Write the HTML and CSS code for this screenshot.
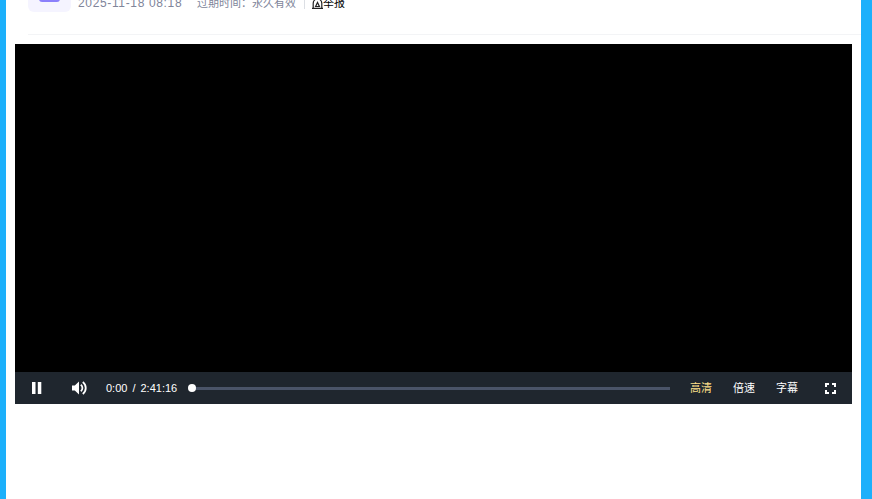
FILE: index.html
```html
<!DOCTYPE html>
<html>
<head>
  <title>Video</title>
  <link rel="stylesheet" href="styles.css">
</head>
<body>

  <div class="page">
    <div class="info">
      <div class="info-row">
        <div class="file-icon"><span class="file-icon-inner"></span></div>
        <span class="date">2025-11-18 08:18</span>
        <span class="expire">过期时间：永久有效</span>
        <span class="sep"></span>
        <span class="report">
          <svg class="report-icon" width="11" height="11" viewBox="0 0 11 11" fill="none" stroke="#222" stroke-width="1.2">
            <path d="M0 10.4h11M1.2 10.4V5.2C1.2 2.8 3.2 1 5.5 1s4.300 1.800 4.300 4.200v5.200"/>
            <path d="M3.600 8.500 5.500 4.500 7.400 8.500z"/>
          </svg>
          <span>举报</span>
        </span>
      </div>
    </div>

    <div class="player">
      <div class="screen"></div>
      <div class="controls">
        <svg class="pause" width="10" height="12" viewBox="0 0 10 12" fill="#fff">
          <rect x="0" y="0" width="3.5" height="12"/>
          <rect x="5.800" y="0" width="3.5" height="12"/>
        </svg>
        <svg class="volume" width="16" height="14" viewBox="0 0 16 14" fill="none">
          <path d="M0 4.500h2.800L7 0.500v13L2.800 9.500H0z" fill="#fff"/>
          <path d="M8.800 3.800a4 4 0 0 1 0 6.400" stroke="#fff" stroke-width="1.800"/>
          <path d="M10.800 1a7.600 7.600 0 0 1 0 12" stroke="#fff" stroke-width="1.800"/>
        </svg>
        <span class="time">0:00<span class="slash">/</span>2:41:16</span>
        <div class="progress"><span class="knob"></span></div>
        <span class="ctl-text quality">高清</span>
        <span class="ctl-text">倍速</span>
        <span class="ctl-text">字幕</span>
        <svg class="fullscreen" width="11" height="11" viewBox="0 0 11 11" fill="none" stroke="#fff" stroke-width="2">
          <path d="M1 4V1h3M7 1h3v3M10 7v3H7M4 10H1V7"/>
        </svg>
      </div>
    </div>
  </div>

</body>
</html>
```

FILE: styles.css
```css
html, body {
  margin: 0;
  padding: 0;
  height: 499px;
  overflow: hidden;
}

body {
  background-color: #fff;
  font-family: "Liberation Sans", "Noto Sans CJK SC", sans-serif;
}

.page {
  height: 499px;
  box-sizing: border-box;
  border-left: 6px solid #1cb0fb;
  border-right: 11px solid #1cb0fb;
  padding: 0 9px;
  overflow: hidden;
}

.info {
  margin: -31px -9px 0 13px;
  padding-bottom: 22px;
  border-bottom: 1px solid #f3f4f6;
}

.info-row {
  display: flex;
  align-items: flex-end;
  font-size: 11px;
  line-height: 18px;
  color: #80859a;
}

.file-icon {
  width: 43px;
  height: 43px;
  border-radius: 6px;
  background-color: #f5f4ff;
  display: flex;
  justify-content: center;
  align-items: center;
  flex-shrink: 0;
}

.file-icon-inner {
  width: 21px;
  height: 21px;
  margin-top: 2px;
  border-radius: 3px;
  background-color: #8b80fb;
}

.date {
  margin-left: 7px;
  letter-spacing: 0.65px;
  font-size: 12px;
  white-space: nowrap;
  width: 105px;
}

.expire {
  margin-left: 14px;
  white-space: nowrap;
}

.sep {
  width: 1px;
  height: 11px;
  margin: 0 7px 3px 8px;
  background-color: #dcdfe4;
}

.report {
  display: flex;
  align-items: center;
  color: #000;
}

.player {
  margin-top: 9px;
  width: 837px;
}

.screen {
  height: 328px;
  background-color: #000;
}

.controls {
  height: 32px;
  background-color: #1f262e;
  display: flex;
  align-items: center;
  color: #fff;
  padding-left: 17px;
}

.pause {
  flex-shrink: 0;
}

.volume {
  margin-left: 30px;
  flex-shrink: 0;
}

.time {
  margin-left: 18px;
  width: 72px;
  font-size: 11px;
  white-space: nowrap;
}

.slash {
  margin: 0 5px;
}

.progress {
  position: relative;
  margin-left: 14px;
  width: 478px;
  height: 3px;
  background-color: #4a5468;
}

.knob {
  position: absolute;
  top: -2.5px;
  left: -4px;
  width: 8px;
  height: 8px;
  border-radius: 50%;
  background-color: #fff;
}

.ctl-text {
  font-size: 11px;
  line-height: 14px;
  width: 22px;
  margin: 0 21px 1px 0;
  white-space: nowrap;
}

.quality {
  margin-left: 20px;
  color: #ffe08a;
}

.fullscreen {
  margin-left: 6px;
  flex-shrink: 0;
}
```
